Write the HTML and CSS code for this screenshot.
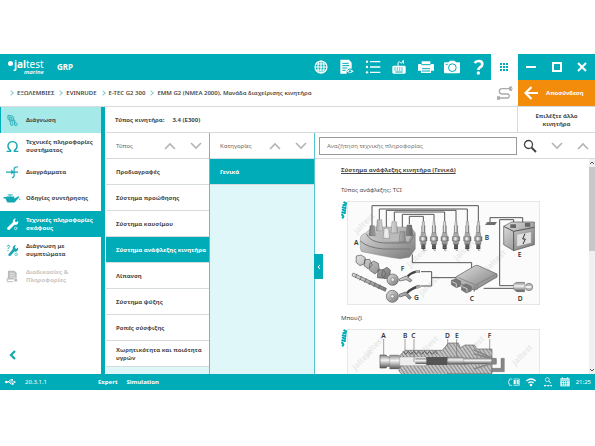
FILE: index.html
```html
<!DOCTYPE html>
<html lang="el">
<head>
<meta charset="utf-8">
<title>Jaltest Marine</title>
<link rel="stylesheet" href="styles.css">
</head>
<body>
<svg class="defs" aria-hidden="true">
  <defs>
    <linearGradient id="metal" x1="0" y1="0" x2="1" y2="1"><stop offset="0" stop-color="#e2e2e2"/><stop offset="1" stop-color="#777"/></linearGradient>
    <linearGradient id="tube" x1="0" y1="0" x2="1" y2="0"><stop offset="0" stop-color="#777"/><stop offset=".4" stop-color="#f0f0f0"/><stop offset="1" stop-color="#666"/></linearGradient>
    <linearGradient id="shaft" x1="0" y1="0" x2="0" y2="1"><stop offset="0" stop-color="#888"/><stop offset=".4" stop-color="#f4f4f4"/><stop offset="1" stop-color="#555"/></linearGradient>
    <pattern id="hatch" width="9" height="9" patternUnits="userSpaceOnUse" patternTransform="rotate(-35)"><rect width="9" height="9" fill="#c4c4c4"/><path d="M0 0V9" stroke="#6c6c6c" stroke-width="4"/></pattern>
    <symbol id="up" viewBox="0 0 12 8"><path d="M1 7 6 2l5 5" fill="none" stroke="currentColor" stroke-width="1.6"/></symbol>
    <symbol id="down" viewBox="0 0 12 8"><path d="M1 1l5 5 5-5" fill="none" stroke="currentColor" stroke-width="1.6"/></symbol>
    <symbol id="plug" viewBox="0 0 28 88"><path d="M11 0h6v10l2 4v20H9V14l2-4z" fill="url(#tube)" stroke="#555"/><path d="M8 34h12l2 12H6z" fill="#aaa" stroke="#555"/><path d="M3 46h22v13H3z" fill="url(#tube)" stroke="#444"/><path d="M6 59h16v10H6z" fill="#999" stroke="#555"/><path d="M8 69h12v14H8z" fill="#444"/><path d="M8 73h12M8 78h12" stroke="#aaa"/><path d="M14 83v4h6" fill="none" stroke="#555" stroke-width="2"/></symbol>
    <symbol id="stamp" viewBox="0 0 18 54"><path d="M10 4l5 3M7 12h7M5 19l8 2M5 26l7 3M4 34l8 2M3 41l3 3q3 3-1 6" fill="none" stroke="#00acb8" stroke-width="6" stroke-linecap="round"/><path d="M15 4q1 20-5 34" fill="none" stroke="#00acb8" stroke-width="3"/></symbol>
  </defs>
</svg>
<div class="app">
  <header class="topbar">
    <div class="logo"><span class="logo-dot"></span><span class="logo-name"><b>jal</b>test</span><i class="logo-sub">marine</i></div>
    <span class="group">GRP</span>
    <nav class="tools">
      <button aria-label="Web"><svg class="ico" viewBox="0 0 48 48"><g fill="none" stroke="#fff" stroke-width="3.5"><circle cx="24" cy="24" r="18"/><ellipse cx="24" cy="24" rx="9" ry="18"/><path d="M24 6v36M6 24h36M9 15h30M9 33h30"/></g></svg></button>
      <button aria-label="Report"><svg class="ico" viewBox="0 0 48 48"><path d="M4 2h26l8 9v18a12 12 0 0 0-15 15H4z" fill="#fff"/><path d="M10 13h19M10 20h21M10 27h15M10 34h10" stroke="#00acb8" stroke-width="3"/><path d="M23 37q9-11 21 0-11 11-21 0z" fill="#fff"/><circle cx="33" cy="37" r="3.5" fill="#00acb8"/></svg></button>
      <button aria-label="List"><svg class="ico" viewBox="0 0 48 48"><g fill="#fff"><circle cx="6" cy="8" r="3.5"/><circle cx="6" cy="24" r="3.5"/><circle cx="6" cy="40" r="3.5"/><path d="M15 6h31v4H15zM15 22h31v4H15zM15 38h31v4H15z"/></g></svg></button>
      <button aria-label="Keyboard"><svg class="ico" viewBox="0 0 48 48"><rect x="4" y="20" width="40" height="24" rx="4" fill="#fff"/><path d="M10 27h28M10 33h28" stroke="#00acb8" stroke-width="3" stroke-dasharray="4 3"/><path d="M13 39h22" stroke="#00acb8" stroke-width="3"/><path d="M21 20v-9q6-6 8 0t8-7v10" fill="none" stroke="#fff" stroke-width="3"/></svg></button>
      <button aria-label="Print"><svg class="ico" viewBox="0 0 48 48"><path d="M11 7h26v8H11zM3 15h42q3 0 3 3v17H39v7H9v-7H0V18q0-3 3-3z" fill="#fff"/><path d="M10 17h28M12 29h24M12 36h24" stroke="#00acb8" stroke-width="3"/></svg></button>
      <button aria-label="Camera"><svg class="ico" viewBox="0 0 48 48"><path d="M3 10h11l4-5h14l4 5h9q3 0 3 3v27q0 3-3 3H3q-3 0-3-3V13q0-3 3-3z" fill="#fff"/><circle cx="25" cy="26" r="11.5" fill="none" stroke="#00acb8" stroke-width="3"/><path d="M5 16h6" stroke="#00acb8" stroke-width="3"/></svg></button>
      <button aria-label="Help"><svg class="ico" viewBox="0 0 48 48"><path d="M14 12q4-6 12-6 11 0 11 9 0 6-7 10-5 3-5 8" fill="none" stroke="#fff" stroke-width="8"/><circle cx="25" cy="42" r="5" fill="#fff"/></svg></button>
    </nav>
    <button class="apps" aria-label="Apps"><svg class="apps-ico" viewBox="0 0 9 9" fill="#00acb8"><path d="M0 0h2v2H0zM3 0h2v2H3zM6 0h2v2H6zM0 3h2v2H0zM3 3h2v2H3zM6 3h2v2H6zM0 6h2v2H0zM3 6h2v2H3zM6 6h2v2H6z"/></svg></button>
    <div class="window-controls">
      <button aria-label="Minimize"><svg class="win" viewBox="0 0 10 10"><path d="M0 5h10" stroke="#fff" stroke-width="2"/></svg></button>
      <button aria-label="Maximize"><svg class="win" viewBox="0 0 10 10"><path d="M1 1h8v8H1z" fill="none" stroke="#fff" stroke-width="2"/></svg></button>
      <button aria-label="Close"><svg class="win" viewBox="0 0 10 10"><path d="m1 1 8 8M9 1 1 9" stroke="#fff" stroke-width="2"/></svg></button>
    </div>
  </header>

  <div class="crumb-row">
    <nav class="crumbs"><a href="#">ΕΞΩΛΕΜΒΙΕΣ</a><a href="#">EVINRUDE</a><a href="#">E-TEC G2 300</a><a href="#">EMM G2 (NMEA 2000), Μονάδα διαχείρισης κινητήρα</a></nav>
    <svg class="cable" viewBox="0 0 48 42"><path d="M4 36h27q6 0 6-6t-6-6H15q-8 0-8-8t8-8h21" fill="none" stroke="#aaa" stroke-width="4"/><path d="M0 31h9v10H0zM36 3l6-2v14l-6-2z" fill="#aaa"/><path d="M43 1q4 7 0 14" fill="none" stroke="#aaa" stroke-width="3"/></svg>
    <button class="disconnect"><svg viewBox="0 0 14 14"><path d="M14 7H2M7.500 1 1.500 7l6 6" fill="none" stroke="#fff" stroke-width="2.200"/></svg><span>Αποσύνδεση</span></button>
  </div>

  <div class="body">
    <nav class="sidebar">
      <a href="#" class="side current"><svg viewBox="0 0 40 40"><g fill="none" stroke="#15a8b2" stroke-width="2.500"><path d="M6 4l14 2 4 5-2 8-9 2-7-5zM10 9l9 2-2 6-6-1zM12 21l3 13 5 1 2-5-5-9"/><path d="M23 18c9 1 1 8 6 9 6 0 6 4 4 8h-6l-1-9z"/></g></svg><span>Διάγνωση</span></a>
      <a href="#" class="side"><svg viewBox="0 0 40 40"><path d="M2 35h12v-3C1 23 5 5 20 5s19 18 6 27v3h12" fill="none" stroke="#15a8b2" stroke-width="4.500"/></svg><span>Τεχνικές πληροφορίες συστήματος</span></a>
      <a href="#" class="side"><svg viewBox="0 0 40 40"><path d="M0 19h23M37 3h-6q-6 0-6 7v18q0 8-7 8M22 19h15" fill="none" stroke="#15a8b2" stroke-width="3.500"/><path d="M16 11l9 8-9 7z" fill="#15a8b2"/></svg><span>Διαγράμματα</span></a>
      <a href="#" class="side wide"><svg viewBox="0 0 54 40"><path d="M10 14h24v6l13-7 3 2-15 17H13q-5-7-6-12H1v-5h9z" fill="#15a8b2"/><path d="M21 14v-4M14 9h15" stroke="#15a8b2" stroke-width="3"/><circle cx="51" cy="22" r="2" fill="#15a8b2"/></svg><span>Οδηγίες συντήρησης</span></a>
      <a href="#" class="side selected"><svg viewBox="0 0 40 40"><path d="M4 30l17-17q-2-7 5-11l4-1-3 8 4 4 6-4q2 9-5 12-3 1-6 0L10 37q-8 0-6-7z" fill="#fff"/><circle cx="30" cy="32" r="4" fill="none" stroke="#fff" stroke-width="3" stroke-dasharray="3 1"/></svg><span>Τεχνικές πληροφορίες σκάφους</span></a>
      <a href="#" class="side"><svg viewBox="0 0 40 40"><path d="M7 32l14-17q-2-7 5-11l4-1-3 8 4 4 6-4q2 9-5 12-3 1-6 0L13 37q-7 1-6-5z" fill="#15a8b2"/><path d="M3 8q2-5 6-4 5 3 0 7-3 2-3 4M6 19v3" fill="none" stroke="#15a8b2" stroke-width="3"/><circle cx="31" cy="32" r="4" fill="none" stroke="#15a8b2" stroke-width="3" stroke-dasharray="3 1"/></svg><span>Διάγνωση με συμπτώματα</span></a>
      <a href="#" class="side off"><svg viewBox="0 0 40 40"><path d="M6 2h20l7 7v20H6z" fill="#bbb"/><path d="M11 10h15M11 16h17M11 22h17" stroke="#fff" stroke-width="2"/><circle cx="30" cy="31" r="6" fill="#bbb" stroke="#fff" stroke-width="2"/><path d="M4 24v12h18" fill="none" stroke="#bbb" stroke-width="3"/></svg><span>Διαδικασίες &amp; Πληροφορίες</span></a>
      <button class="collapse" aria-label="Collapse"><svg viewBox="0 0 7 10"><path d="M6 1 2 5l4 4" fill="none" stroke="#15a8b2" stroke-width="2.200"/></svg></button>
    </nav>

    <main class="main">
      <div class="engine-row">
        <div class="engine"><b>Τύπος κινητήρα:</b><b>3.4 (E300)</b></div>
        <button class="other">Επιλέξτε άλλο κινητήρα</button>
      </div>
      <div class="columns">
        <section class="column">
          <div class="column-head"><span>Τύπος</span><button aria-label="Up"><svg><use href="#up"/></svg></button><button aria-label="Down"><svg><use href="#down"/></svg></button></div>
          <button class="item">Προδιαγραφές</button>
          <button class="item">Σύστημα προώθησης</button>
          <button class="item">Σύστημα καυσίμου</button>
          <button class="item active">Σύστημα ανάφλεξης κινητήρα</button>
          <button class="item">Λίπανση</button>
          <button class="item">Σύστημα ψύξης</button>
          <button class="item">Ροπές σύσφιξης</button>
          <button class="item">Χωρητικότητα και ποιότητα υγρών</button>
        </section>
        <section class="column">
          <div class="column-head"><span>Κατηγορίες</span><button aria-label="Up"><svg><use href="#up"/></svg></button><button aria-label="Down"><svg><use href="#down"/></svg></button></div>
          <button class="item active">Γενικά</button>
        </section>
        <section class="detail">
          <button class="handle" aria-label="Collapse panel"><svg viewBox="0 0 4 6"><path d="M3 1 1 3l2 2" fill="none" stroke="#fff"/></svg></button>
          <div class="search-row">
            <input type="text" aria-label="Αναζήτηση" placeholder="Αναζήτηση τεχνικής πληροφορίας">
            <button aria-label="Search" class="lens"><svg viewBox="0 0 14 14"><circle cx="5.500" cy="5.500" r="4" fill="none" stroke="#444" stroke-width="1.300"/><path d="m8.500 8.500 4.500 4.500" stroke="#444" stroke-width="2"/></svg></button>
            <button aria-label="Next"><svg><use href="#down"/></svg></button>
            <button aria-label="Previous"><svg><use href="#up"/></svg></button>
          </div>
          <div class="viewer">
            <article class="article">
              <h1>Σύστημα ανάφλεξης κινητήρα (Γενικά)</h1>
              <p>Τύπος ανάφλεξης: TCI</p>
              <figure>
                <svg class="stamp"><use href="#stamp"/></svg>
                <svg class="drawing" viewBox="0 0 579 312">
                  <rect x="1" y="1" width="577" height="310" fill="#fbfbfb" stroke="#ddd" stroke-width="2"/>
                  <g class="mark"><text transform="translate(30 100) rotate(-45)">jaltest</text><text transform="translate(225 285) rotate(-45)">jaltest</text><text transform="translate(190 200) rotate(-45)">jaltest</text><text transform="translate(330 180) rotate(-45)">jaltest</text><text transform="translate(425 210) rotate(-45)">jaltest</text></g>
                  <g fill="none" stroke="#555" stroke-width="3">
                    <path d="M75 75V14h319v48M97 56V24h264v38M118 78V28h209v34M142 60V33h151v29M166 90V40h95v22M187 70V46h42v16"/>
                    <path d="M196 160v25h178v16M222 212h32v43h-32M254 230h76M429 68V50h98v20M500 70V56h-42v198h44M410 262h95"/>
                  </g>
                  <path d="M40 112q1-12 16-16l20-18h116l13 18v48l-18 25-28 4-30-4-60-12-25-5q-6-6-4-40z" fill="url(#metal)" stroke="#666"/>
                  <path d="M58 98q10 25 52 28h78l14-25M40 120q20 20 70 24h80" fill="none" stroke="#777" stroke-width="3"/>
                  <path d="M64 100q30 18 60 20h60l8-18q-60-20-128-2z" fill="#bbb"/>
                  <g fill="url(#tube)" stroke="#555"><path d="M69 74h13l3 30H66zM91 56h13l3 34H88zM111 82h14l3 30h-20zM135 62h13l4 34h-20zM159 92h14l3 30h-20zM180 72h14l3 32h-20z"/></g>
                  <g><use href="#plug" x="215" y="61" width="28" height="88"/><use href="#plug" x="247" y="61" width="28" height="88"/><use href="#plug" x="279" y="61" width="28" height="88"/><use href="#plug" x="313" y="61" width="28" height="88"/><use href="#plug" x="347" y="61" width="28" height="88"/><use href="#plug" x="380" y="61" width="28" height="88"/></g>
                  <g fill="url(#metal)" stroke="#555" stroke-width="2"><path d="M28 165l14-3 13 8-2 18-14 6-12-10zM53 176l15-1 8 17-12 12-13-10zM68 188l12-8 14 7 3 20-13 12-16-11zM93 206h16l8 12-8 14-18-2zM108 206l12-7 10 8-2 24-16 2-8-10z"/><circle cx="137" cy="236" r="17"/><path d="M18 216l100 46-3 9L15 224z"/><path d="M30 218l-5 13M44 225l-6 13M58 232l-6 13M72 239l-6 13M86 245l-6 13M100 251l-6 13"/><circle cx="136" cy="286" r="18"/><path d="M157 234l20-9 8 5 10 8-5 5-12-7-20 4zM157 280l18-7 8 5 10 12-6 5-12-12-17 5z"/></g>
                  <circle cx="137" cy="236" r="5" fill="#eee" stroke="#444"/><circle cx="136" cy="286" r="5" fill="#eee" stroke="#444"/>
                  <path d="M182 226q14-15 37-15M180 276q15-16 40-21" fill="none" stroke="#444" stroke-width="7"/><path d="M206 212l12-1M208 260l12-4" stroke="#aaa" stroke-width="8"/>
                  <path d="M326 228l58-34q5-2 10 0l56 25v9l-68 40-52-24z" fill="url(#metal)" stroke="#555" stroke-width="2"/><path d="M332 229l54 23 60-32M382 255v18M390 250v17" fill="none" stroke="#777" stroke-width="2"/>
                  <path d="M313 238l14-5 14 7v16l-13 4-15-9zM344 254l14-5 15 8v13l-15 6-15-9z" fill="#777" stroke="#444"/><path d="M316 242l12 6v10M346 257l14 6v10" fill="none" stroke="#ccc" stroke-width="3"/>
                  <path d="M420 63h30l-6 9h-30z" fill="#777"/><path d="M422 72l5-9M430 72l5-9M438 72l5-9" stroke="#333"/>
                  <path d="M470 76l24-13h68v68l-62 18-30-18z" fill="url(#metal)" stroke="#555" stroke-width="2"/><path d="M470 76l30 15 62-12M500 91v58" fill="none" stroke="#555" stroke-width="3"/><path d="M509 100l44-8v34l-44 11z" fill="#e0e0e0" stroke="#777"/><path d="M534 98l-7 16h8l-7 15" fill="none" stroke="#333" stroke-width="3"/><path d="M490 70h17v11h-17zM534 66h16v11h-16z" fill="#666"/>
                  <path d="M500 249l8-5h25v28h-24l-9-7z" fill="url(#shaft)" stroke="#555"/><circle cx="546" cy="258" r="11" fill="#bbb" stroke="#666" stroke-width="2"/><path d="M535 255h18v6h-18z" fill="#eee"/>
                  <g class="tag"><text x="21" y="132">A</text><text x="413" y="116">B</text><text x="368" y="301">C</text><text x="512" y="301">D</text><text x="512" y="167">E</text><text x="161" y="210">F</text><text x="201" y="297">G</text></g>
                </svg>
              </figure>
              <p>Μπουζί</p>
              <figure>
                <svg class="stamp"><use href="#stamp"/></svg>
                <svg class="drawing" viewBox="0 0 579 312">
                  <rect x="1" y="1" width="577" height="310" fill="#fbfbfb" stroke="#ddd" stroke-width="2"/>
                  <g class="mark"><text transform="translate(60 84) rotate(-45)">jaltest</text><text transform="translate(222 84) rotate(-45)">jaltest</text><text transform="translate(360 84) rotate(-45)">jaltest</text><text transform="translate(505 110) rotate(-45)">jaltest</text><text transform="translate(25 124) rotate(-45)">jaltest</text></g>
                  <path d="M156 82l18-18h112l18-22h30l6 14 14-8h28l8 12h45v74H300l-10 10H172l-16-18z" fill="url(#hatch)" stroke="#666" stroke-width="2"/>
                  <path d="M168 67l8 9 8-9 8 9 8-9 8 9 8-9 8 9 8-9 8 9 8-9 8 9 8-9 8 9" fill="none" stroke="#555" stroke-width="3"/>
                  <path d="M99 78h18l5 6h40v28h-40l-5 5H99z" fill="url(#shaft)" stroke="#555" stroke-width="2"/><path d="M128 78h26l10 8v26l-10 8h-26z" fill="url(#shaft)" stroke="#666"/><path d="M158 84h80v26h-80z" fill="#eee" stroke="#777"/><path d="M205 88h100v17H205z" fill="url(#shaft)"/><path d="M238 84h63v24h-63z" fill="#555"/><path d="M302 84h38l18 5v17h-56z" fill="url(#shaft)" stroke="#555"/><path d="M350 87h82l16 5v9l-16 4h-82z" fill="url(#shaft)" stroke="#777"/>
                  <path d="M380 62l54 24M380 74l50 14M380 120l52-16" stroke="#888" stroke-width="5"/>
                  <path d="M434 88h14v18h-14zM462 88h10v40h-38v-10h28z" fill="#888" stroke="#555"/>
                  <path d="M110 30v52M174 30v38M201 30v70M302 30v22M329 30v56M428 30v36" stroke="#777" stroke-width="2"/>
                  <g class="tag"><text x="103" y="26">A</text><text x="168" y="26">B</text><text x="193" y="26">C</text><text x="294" y="26">D</text><text x="324" y="26">E</text><text x="422" y="26">F</text></g>
                </svg>
              </figure>
            </article>
            <div class="scroll" aria-hidden="true"><svg viewBox="0 0 6 6"><path d="M1 4l2-2 2 2" fill="none" stroke="#555"/></svg><div class="thumb"></div><svg viewBox="0 0 6 6"><path d="M1 2l2 2 2-2" fill="none" stroke="#555"/></svg></div>
          </div>
        </section>
      </div>
    </main>
  </div>

  <footer class="status">
    <svg class="usb" viewBox="0 0 33 18"><g stroke="#fff" stroke-width="2.500" fill="none"><path d="M4 9h25M9 9l6-6h5M12 9l6 6h4"/></g><circle cx="4" cy="9" r="4" fill="#fff"/><path d="M27 5l6 4-6 4zM19 0h5v5h-5zM21 12h5v5h-5z" fill="#fff"/></svg>
    <span class="version">20.3.1.1</span>
    <b>Expert</b><b>Simulation</b>
    <div class="tray">
      <svg viewBox="0 0 36 30"><path d="M13 6H4v6H1v7h3v6h9M17 6h17v19H17" fill="none" stroke="#fff" stroke-width="2"/><path d="M17 9h6v13h-6zM26 9h6v13h-6z" fill="#fff"/></svg>
      <svg viewBox="0 0 36 30"><g fill="none" stroke="#fff" stroke-width="4"><path d="M4 12q14-12 28 0M10 18q8-7 16 0"/></g><circle cx="18" cy="24" r="4" fill="#fff"/></svg>
      <svg viewBox="0 0 36 30"><circle cx="16" cy="8" r="6" fill="none" stroke="#fff" stroke-width="2"/><path d="M20 12l7 7" stroke="#fff" stroke-width="3"/><path d="M6 26h7M16 26h6M25 26h5" stroke="#fff" stroke-width="4"/></svg>
      <svg viewBox="0 0 36 30"><path d="M4 4h28v24H4z" fill="#fff"/><path d="M4 9h28" stroke="#00acb8" stroke-width="2"/><path d="M8 14h20M8 19h20M8 24h20" stroke="#00acb8" stroke-width="3" stroke-dasharray="4 2"/><path d="M10 1v5M26 1v5" stroke="#fff" stroke-width="3"/></svg>
      <time>21:25</time>
    </div>
  </footer>
</div>
</body>
</html>
```
FILE: styles.css
```css
:root {
  --teal: #00acb8;
  --ink: #484848;
  --line: #d6dcdd;
  --pale: #dff7f9;
}

* { box-sizing: border-box; }

body {
  margin: 0;
  padding: 54px 0 56px;
  background: #fff;
  color: var(--ink);
  font: 6px/8px "Noto Sans", "Open Sans", sans-serif;
}

button {
  margin: 0;
  padding: 0;
  border: 0;
  background: none;
  color: inherit;
  font: inherit;
  display: flex;
  align-items: center;
  justify-content: center;
}

a { color: inherit; text-decoration: none; }
svg { display: block; flex: none; }
.defs { position: absolute; width: 0; height: 0; }

.app {
  display: flex;
  flex-direction: column;
  height: calc(100vh - 110px);
}

/* Top bar */
.topbar {
  display: flex;
  height: 26px;
  flex: none;
  background: var(--teal);
  color: #fff;
}
.logo {
  display: grid;
  grid-template-columns: 6px auto;
  align-content: center;
  align-items: center;
  margin-left: 8px;
  width: 49px;
}
.logo-dot { width: 5px; height: 5px; border-radius: 50%; background: #fff; }
.logo-name { font-size: 10px; line-height: 10px; }
.logo-sub { grid-column: 2; padding-left: 10px; font-size: 6px; line-height: 7px; font-weight: 600; }
.group { align-self: center; font-weight: 700; font-size: 8px; }
.tools { display: flex; margin-left: auto; width: 183px; }
.tools button { flex: 1; }
.ico { width: 16px; height: 16px; }
.apps { width: 26px; background: #fff; }
.apps-ico { width: 9px; height: 9px; }
.window-controls { display: flex; width: 78px; border-left: 1px solid #fff; }
.window-controls button { flex: 1; }
.win { width: 10px; height: 10px; }

/* Breadcrumbs */
.crumb-row {
  display: flex;
  align-items: center;
  height: 27px;
  flex: none;
  border-bottom: 1px solid var(--line);
}
.crumbs { display: flex; gap: 4px; flex: 1; padding-left: 9px; font-weight: 600; }
.crumbs a { display: flex; align-items: center; gap: 4px; white-space: nowrap; }
.crumbs a::before {
  content: "";
  width: 3px;
  height: 3px;
  border: solid #8ccdd2;
  border-width: 1px 1px 0 0;
  transform: rotate(45deg);
}
.cable { width: 16px; height: 14px; margin-right: 5px; }
.disconnect {
  width: 77px;
  align-self: stretch;
  justify-content: flex-start;
  gap: 8px;
  padding-left: 6px;
  background: #f28c0a;
  color: #fff;
  font-weight: 700;
}
.disconnect svg { width: 14px; height: 14px; }

/* Body */
.body { display: flex; flex: 1; min-height: 0; }
.sidebar {
  display: flex;
  flex-direction: column;
  width: 105px;
  flex: none;
  border-right: 4px solid var(--teal);
}
.side {
  display: grid;
  grid-template-columns: 14px 1fr;
  gap: 6px;
  align-items: center;
  height: 26px;
  flex: none;
  padding-left: 6px;
  font-weight: 700;
}
.side svg { width: 13px; height: 13px; }
.side.wide { grid-template-columns: 18px 1fr; gap: 5px; padding-left: 3px; }
.side.wide svg { width: 18px; }
.side.current { background: #a6e9e9; box-shadow: inset 1px 0 var(--teal); }
.side.selected { background: var(--teal); color: #fff; }
.side.off { color: #c6c6c6; }
.collapse { width: 24px; height: 20px; margin-top: auto; margin-bottom: 9px; }
.collapse svg { width: 7px; height: 10px; }

.main { display: flex; flex-direction: column; flex: 1; min-width: 0; padding-left: 1px; }
.engine-row { display: flex; height: 26px; flex: none; border-bottom: 1px solid var(--line); }
.engine { display: flex; align-items: center; gap: 8px; flex: 1; padding-left: 9px; }
.other { width: 78px; padding: 0 14px; border-left: 1px solid var(--line); font-weight: 700; }

.columns {
  display: grid;
  grid-template-columns: 104px 105px 1fr;
  flex: 1;
  min-height: 0;
}
.column {
  display: flex;
  flex-direction: column;
  min-height: 0;
  border-right: 1px solid #55c5cd;
  background: var(--pale);
}
.column-head {
  display: flex;
  align-items: center;
  height: 26px;
  flex: none;
  padding: 0 7px 0 10px;
  gap: 14px;
  border-bottom: 1px solid var(--line);
  background: #fff;
  color: #666;
}
.column-head span { flex: 1; }
.column-head svg, .search-row svg { width: 12px; height: 8px; color: #b4b4b4; }
.item {
  justify-content: flex-start;
  height: 26px;
  flex: none;
  padding-left: 10px;
  border-bottom: 1px solid var(--line);
  background: #fff;
  font-weight: 700;
  text-align: left;
}
.item.active { background: var(--teal); color: #fff; }

/* Detail */
.detail { position: relative; display: flex; flex-direction: column; min-width: 0; min-height: 0; }
.handle {
  position: absolute;
  left: -1px;
  top: 121px;
  width: 9px;
  height: 25px;
  background: var(--teal);
}
.handle svg { width: 4px; height: 6px; }
.search-row {
  display: flex;
  align-items: center;
  gap: 14px;
  height: 26px;
  flex: none;
  padding: 0 6px 0 4px;
  border-bottom: 1px solid var(--line);
}
.search-row input {
  flex: 1;
  min-width: 0;
  height: 18px;
  margin-right: -8px;
  padding: 0 7px;
  border: 1px solid #999;
  background: #fff;
  color: #555;
  font: inherit;
}
.search-row input::placeholder { color: #777; opacity: 1; }
.search-row .lens svg { width: 14px; height: 14px; }
.viewer { display: flex; flex: 1; min-height: 0; overflow: hidden; }
.article { flex: 1; padding: 7px 0 0 26px; overflow: hidden; }
.article h1 { margin: 0 0 12px; font-size: 6px; line-height: 8px; font-weight: 700; text-decoration: underline; }
.article p { margin: 0 0 7px; }
figure { display: flex; margin: 0 0 9px; }
.stamp { width: 6px; height: 18px; }
.drawing { width: 193px; height: 104px; }
.mark text { fill: #e9e9e9; font: 700 24px "Noto Sans", sans-serif; }
.tag text { fill: #333; font: 600 20px "Noto Sans", sans-serif; }
.scroll { display: flex; flex-direction: column; width: 6px; background: #f0f0f0; }
.scroll svg { width: 6px; height: 8px; }
.thumb { height: 84px; margin-bottom: auto; background: #c8c8c8; }

/* Status bar */
.status {
  display: flex;
  align-items: center;
  height: 16px;
  flex: none;
  padding: 0 4px 0 5px;
  background: var(--teal);
  color: #fff;
}
.usb { width: 11px; height: 6px; }
.version { width: 82px; padding-left: 9px; }
.status b { margin-right: 9px; }
.tray { display: flex; align-items: center; gap: 5px; margin-left: auto; }
.tray svg { width: 12px; height: 10px; }
```
